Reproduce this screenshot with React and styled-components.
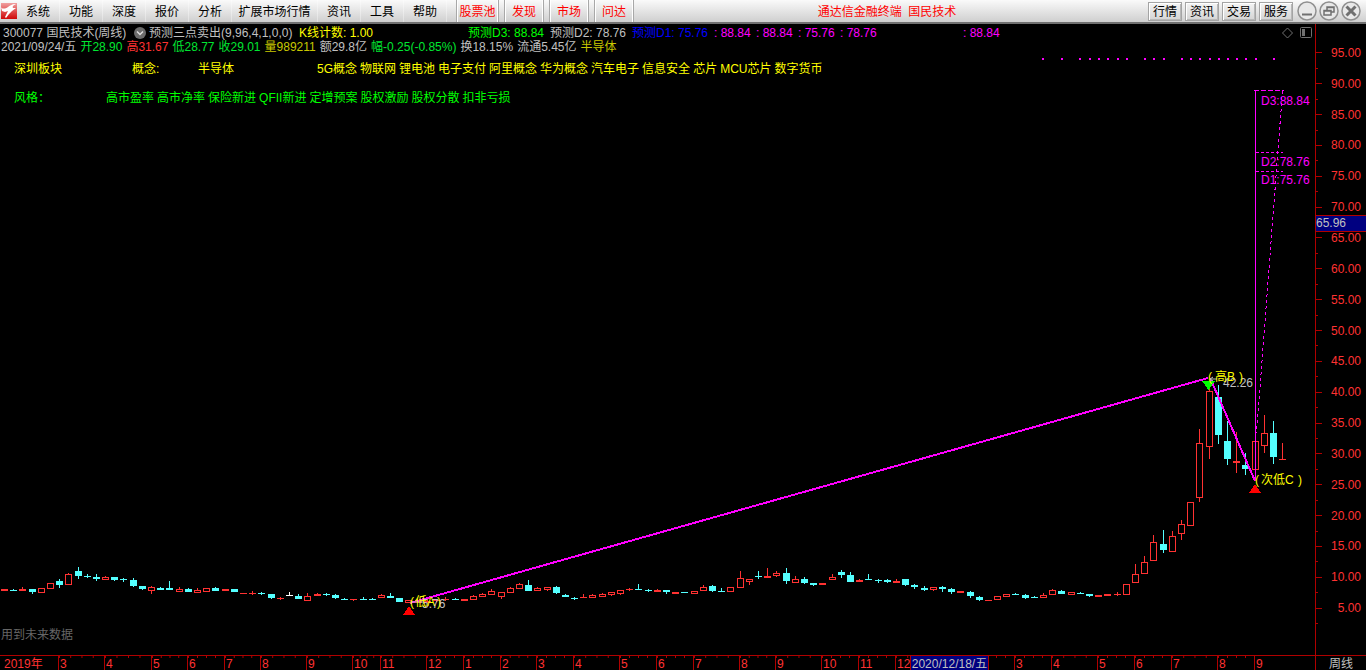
import React from "react";
import styled, { createGlobalStyle } from "styled-components";

const Global = createGlobalStyle`
  * { box-sizing: border-box; }
  body {
    margin: 0;
    background: #000;
    color: #c0c0c0;
    font: 12px/14px "Liberation Sans", "Noto Sans CJK SC", sans-serif;
    overflow: hidden;
  }
  button { font: inherit; padding: 0; }
`;

const RED = "#ff3232";
const AXIS = "#b00000";
const CYAN = "#54ffff";
const MAGENTA = "#ff00ff";
const YELLOW = "#ffff00";
const GREEN = "#00ff00";
const OLIVE = "#c8c800";

const Page = styled.div`
  display: flex;
  flex-direction: column;
  height: 100vh;
`;

/* ---------- Title bar ---------- */

const TitleBar = styled.header`
  display: flex;
  align-items: center;
  flex: none;
  height: 24px;
  padding-left: 1px;
  color: #000;
  background: linear-gradient(#fafafa, #cfcfcf);
  border-bottom: 2px solid #707070;
  white-space: nowrap;
`;

const Logo = styled.svg`
  flex: none;
  width: 16px;
  height: 16px;
`;

const Menu = styled.nav`
  display: flex;
  height: 22px;
`;

const MenuButton = styled.button`
  width: ${(p) => (p.$wide ? 86 : 43)}px;
  padding-top: 2px;
  border: 0;
  border-right: 1px solid rgba(255, 255, 255, 0.35);
  background: none;
  color: #000;
`;

const Shortcuts = styled.div`
  display: flex;
  gap: 5px;
  height: 22px;
  margin-left: 9px;
`;

const ShortcutButton = styled.button`
  width: ${(p) => (p.$wide ? 43 : 40)}px;
  padding-top: 2px;
  border: solid #a8a8a8;
  border-width: 0 1px;
  box-shadow: inset 1px 0 #fff, inset -1px 0 #fff;
  background: none;
  color: #f00;
`;

const Title = styled.h1`
  flex: 1;
  margin: 0;
  padding: 2px 8px 0 0;
  font: inherit;
  text-align: center;
  color: #f00;
`;

const Actions = styled.div`
  display: flex;
  gap: 3px;
`;

const ActionButton = styled.button`
  width: 34px;
  height: 19px;
  padding-top: 1px;
  border: 1px solid #a4a4a4;
  box-shadow: inset 1px 1px #fff, inset -1px -1px #b8b8b8;
  background: linear-gradient(#f4f4f4, #d4d4d4);
  color: #000;
`;

const WindowControls = styled.div`
  display: flex;
  gap: 2px;
  padding: 0 5px 0 4px;
`;

const WindowButton = styled.button`
  display: block;
  width: 20px;
  height: 20px;
  border: 0;
  background: none;
  svg { display: block; }
`;

/* ---------- Chart area ---------- */

const Body = styled.main`
  display: grid;
  flex: 1;
  min-height: 0;
  grid-template-columns: minmax(0, 1fr) 51px;
  grid-template-rows: minmax(0, 1fr) 15px;
`;

const Pane = styled.section`
  display: grid;
  min-height: 0;
  grid-template: minmax(0, 1fr) / minmax(0, 1fr);
  > * { grid-area: 1 / 1; }
`;

const Plot = styled.svg`
  width: 100%;
  height: 100%;
`;

const Legend = styled.div`
  display: flex;
  flex-direction: column;
  z-index: 1;
  padding-top: 2px;
  white-space: nowrap;
`;

const Line = styled.div`
  display: flex;
  align-items: center;
  height: 14px;
  padding-left: ${(p) => p.$indent || 0}px;
  gap: ${(p) => p.$gap || 0}px;
  margin-bottom: ${(p) => p.$after || 0}px;
  color: ${(p) => p.$color || "inherit"};
`;

const Item = styled.span`
  flex: none;
  width: ${(p) => (p.$w ? p.$w + "px" : "auto")};
  color: ${(p) => p.$color || "inherit"};
`;

const Toggle = styled.button`
  width: 16px;
  height: 12px;
  border: 0;
  background: none;
  svg { display: block; }
`;

const PaneTools = styled.div`
  display: flex;
  gap: 7px;
  margin-left: auto;
  padding-right: 3px;
  svg { display: block; }
`;

const Note = styled.p`
  margin: auto 0 13px;
  padding-left: 1px;
  color: #666;
`;

/* ---------- Axes ---------- */

const PriceAxis = styled.aside`
  position: relative;
  display: flex;
  flex-direction: column;
  border-left: 1px solid ${AXIS};
  padding: 13px 0 32px;
`;

const Price = styled.div`
  position: relative;
  display: flex;
  flex: 1;
  align-items: center;
  justify-content: flex-end;
  padding: 1px 5px 0 0;
  color: ${RED};
  &::before, &::after {
    content: "";
    position: absolute;
    left: 0;
    top: 50%;
    width: 6px;
    height: 1px;
    background: ${AXIS};
  }
  &::after { top: 100%; width: 2px; }
`;

const PriceCursor = styled.output`
  position: absolute;
  top: 30.2%;
  left: 0;
  right: 0;
  height: 17px;
  border: solid ${AXIS};
  border-width: 1px 0;
  background: #000080;
  color: #c0c0c0;
`;

const DateAxis = styled.div`
  position: relative;
  display: grid;
  grid-template-columns: ${(p) => p.$columns};
  border-top: 1px solid ${AXIS};
  color: ${RED};
`;

const Month = styled.span`
  min-width: 0;
  padding: 1px 0 0 ${(p) => (p.$first ? 4 : 1)}px;
  border-left: ${(p) => (p.$first ? 0 : 1)}px solid ${AXIS};
  white-space: nowrap;
  background: ${(p) =>
    p.$plain
      ? "none"
      : `linear-gradient(to right, ${AXIS} 1px, transparent 1px) 0 0 / 25% 2px repeat-x`};
`;

const DateCursor = styled.output`
  position: absolute;
  top: 0;
  left: 69.2%;
  width: 79px;
  height: 14px;
  padding-top: 1px;
  border: solid ${AXIS};
  border-width: 0 1px;
  background: #000080;
  color: #c0c0c0;
  text-align: center;
  white-space: nowrap;
`;

const Period = styled.div`
  padding-top: 1px;
  text-align: center;
  border: solid ${AXIS};
  border-width: 1px 0 0 1px;
`;

/* ---------- Data ---------- */

const MENU = ["系统", "功能", "深度", "报价", "分析", "扩展市场行情", "资讯", "工具", "帮助"];
const SHORTCUTS = ["股票池", "发现", "市场", "问达"];
const ACTIONS = ["行情", "资讯", "交易", "服务"];

const QUOTE = [
  ["2021/09/24/五"],
  ["开28.90", "#00e632"],
  ["高31.67", RED],
  ["低28.77", "#00e632"],
  ["收29.01", "#00e632"],
  ["量989211", OLIVE],
  ["额29.8亿"],
  ["幅-0.25(-0.85%)", "#00e632"],
  ["换18.15%"],
  ["流通5.45亿"],
  ["半导体", OLIVE],
];

const CONCEPTS = ["5G概念", "物联网", "锂电池", "电子支付", "阿里概念", "华为概念", "汽车电子", "信息安全", "芯片", "MCU芯片", "数字货币"];
const STYLES = ["高市盈率", "高市净率", "保险新进", "QFII新进", "定增预案", "股权激励", "股权分散", "扣非亏损"];

const PRICES = Array.from({ length: 19 }, (_, i) => 95 - i * 5);

// [label, share of the axis width]
const MONTHS = [
  ["2019年", 58], ["3", 46], ["4", 47], ["5", 36], ["6", 37], ["7", 36], ["8", 46], ["9", 46],
  ["10", 28], ["11", 46], ["12", 37], ["1", 37], ["2", 36], ["3", 37], ["4", 46], ["5", 37],
  ["6", 37], ["7", 46], ["8", 36], ["9", 46], ["10", 37], ["11", 37], ["12", 46], ["", 36],
  ["", 37], ["3", 37], ["4", 46], ["5", 37], ["6", 37], ["7", 46], ["8", 37], ["9", 61],
];

// kind, x, high, body top, body bottom, low
const CANDLES = `
r 4 589 589 591 591|c 13 589 590 591 591|r 22 587 589 591 591|c 32 589 589 592 594|r 41 588 588 593 593
r 50 583 583 589 589|c 59 579 581 585 588|r 68 573 574 585 585|c 78 567 571 576 579|c 87 574 576 577 578
c 96 574 577 579 581|r 105 576 577 580 580|c 114 577 577 580 581|c 123 578 579 580 582|c 133 578 580 586 587
c 142 586 586 589 590|r 151 586 587 591 594|c 160 587 588 590 590|c 169 581 588 590 590|r 179 587 589 592 592
c 188 588 589 592 592|r 197 588 590 593 593|r 206 588 588 592 592|c 215 587 588 591 591|r 225 589 589 591 591
c 234 589 589 592 592|r 243 593 593 594 594|r 252 591 593 594 595|c 261 592 593 594 595|c 271 594 594 598 599
r 280 597 598 599 600|w 289 592 595 596 596|c 298 594 596 599 599|r 307 593 596 601 601|r 317 593 594 596 596
c 326 593 594 595 596|c 335 594 595 598 599|c 344 598 599 600 600|r 353 599 599 600 601|c 363 597 599 600 600
c 372 598 599 600 600|r 381 594 595 598 598|c 390 593 596 598 598|c 399 598 598 602 602|r 408 600 600 603 603
r 418 601 601 603 603|r 427 600 601 603 603|r 436 599 600 601 602|r 445 597 599 600 601|c 455 598 599 600 600
r 464 599 599 601 601|r 473 595 596 600 600|r 482 593 594 597 597|r 491 589 591 595 595|r 501 592 592 597 599
r 510 587 588 593 593|r 519 583 584 589 589|c 528 580 585 591 591|r 537 587 588 591 591|r 547 587 587 590 591
c 556 586 587 593 594|c 565 594 595 597 597|c 574 597 598 599 600|r 583 594 597 598 598|r 592 594 595 598 598
r 602 593 594 597 597|r 611 592 592 595 596|r 620 590 590 594 595|r 629 588 589 590 591|c 638 584 589 590 590
c 648 589 590 591 592|r 657 589 590 592 592|c 666 590 590 592 594|r 675 592 592 594 594|c 684 592 592 593 593
r 694 591 591 594 594|r 703 585 587 591 591|c 712 585 586 591 592|c 721 588 591 592 592|r 730 587 587 592 592
r 740 571 578 588 588|r 749 579 579 582 585|c 758 571 576 577 579|r 767 568 576 578 578|r 776 571 573 576 577
c 786 568 573 581 584|r 795 576 579 583 583|c 804 577 579 583 584|c 813 583 583 585 586|r 822 583 583 585 585
r 832 574 577 580 580|c 841 570 572 575 578|c 850 572 575 582 582|r 859 579 580 582 582|c 868 574 579 580 580
c 878 579 580 581 583|c 887 579 580 582 583|r 896 579 581 583 583|c 905 579 579 585 586|c 914 584 585 587 589
c 924 586 588 590 591|r 933 587 587 590 591|c 942 586 587 589 592|c 951 588 589 592 594|r 960 591 591 593 593
c 970 591 592 596 598|c 979 596 597 600 601|r 988 600 600 601 601|r 997 596 596 600 600|r 1006 594 594 597 597
c 1015 593 594 595 595|c 1025 594 595 598 599|c 1034 596 597 598 598|r 1043 593 595 598 598|r 1052 589 590 595 595
c 1061 590 591 594 594|r 1071 592 592 595 595|c 1080 592 593 594 594|c 1089 594 594 596 597|r 1098 595 595 597 597
r 1107 594 594 596 596|r 1117 592 594 595 596|r 1126 584 584 595 595|r 1135 564 574 583 583|r 1144 556 562 574 574
r 1153 535 542 561 561|c 1163 530 544 550 553|r 1172 531 536 552 552|r 1181 520 524 534 540|r 1190 502 502 526 526
r 1199 429 443 498 502|r 1209 384 391 447 459|c 1218 385 397 435 444|c 1227 421 441 459 465|r 1236 432 461 463 473
c 1245 453 465 469 475|r 1255 441 441 470 470|r 1264 415 433 446 453|c 1273 421 433 457 464|r 1282 443 459 460 460
`
  .trim()
  .split(/[|\n]/)
  .map((s) => {
    const [kind, ...n] = s.split(" ");
    return [kind, ...n.map(Number)];
  });

const DOTS = [1042, 1061, 1079, 1089, 1098, 1107, 1117, 1126, 1144, 1153, 1163, 1181, 1190, 1199, 1209, 1218, 1227, 1236, 1245, 1255, 1273];

const COLORS = { r: RED, c: CYAN, w: "#fff" };

function Candle({ data }) {
  const [kind, x, high, top, bottom, low] = data;
  const color = COLORS[kind];
  const hollow = kind === "r" && bottom - top > 2;
  return (
    <g>
      {top > high && <rect x={x} y={high} width="1" height={top - high} fill={color} />}
      {low > bottom && <rect x={x} y={bottom} width="1" height={low - bottom} fill={color} />}
      {hollow ? (
        <rect x={x - 2.5} y={top + 0.5} width="6" height={bottom - top - 1} fill="none" stroke={color} />
      ) : (
        <rect x={x - 3} y={top} width="7" height={bottom - top} fill={color} />
      )}
    </g>
  );
}

function Chart() {
  return (
    <Plot viewBox="0 24 1315 631" preserveAspectRatio="none" role="img" aria-label="周线 K线图">
      <g shapeRendering="crispEdges">
        {CANDLES.map((c) => <Candle key={c[1]} data={c} />)}
        {DOTS.map((x) => <rect key={x} x={x} y="58" width="2" height="2" fill={MAGENTA} />)}
        <g fill="none" stroke={MAGENTA}>
          <path d="M1255.5 90V481" />
          <path d="M1254 90.5H1284" strokeDasharray="5 2" />
          <path d="M1256 152.5H1283M1256 171.5H1283" strokeDasharray="3 2" />
          <path d="M1282.5 91L1256.5 433" strokeDasharray="3 3" />
          <path d="M410 603L1208 378" strokeWidth="2" />
          <path d="M1211 380L1255 481" strokeWidth="2" />
        </g>
        <path d="M403 615L409 606L415 615Z" fill="#f00" />
        <path d="M1249 493L1255 484L1261 493Z" fill="#f00" />
        <path d="M1202 381H1215L1208.5 390Z" fill={GREEN} />
      </g>
      <g fill="#c0c0c0">
        <path d="M1210 379h7M1213 377l-3 2l3 2M410 602h14" stroke="#c0c0c0" fill="none" />
        <text x="1223" y="387">42.26</text>
        <text x="422" y="608">5.76</text>
      </g>
      <g fill={YELLOW}>
        <text x="1208" y="381">(</text>
        <text x="1215" y="381">高B</text>
        <text x="1239" y="381">)</text>
        <text x="410" y="606">(</text>
        <text x="415" y="606">低A</text>
        <text x="437" y="606">)</text>
        <text x="1255" y="484">(</text>
        <text x="1261" y="484">次低C</text>
        <text x="1298" y="484">)</text>
      </g>
      <g fill={MAGENTA}>
        <text x="1261" y="105">D3:88.84</text>
        <text x="1261" y="166">D2:78.76</text>
        <text x="1261" y="184">D1:75.76</text>
      </g>
    </Plot>
  );
}

function WindowIcon({ children }) {
  return (
    <svg width="20" height="20" viewBox="0 0 20 20" fill="none" stroke="#707070">
      <circle cx="10" cy="10" r="9" fill="#e8e8e8" stroke="#909090" strokeWidth="1.5" />
      {children}
    </svg>
  );
}

export default function App() {
  return (
    <Page>
      <Global />
      <TitleBar>
        <Logo viewBox="0 0 16 16">
          <defs>
            <linearGradient id="logo" x1="0" y1="0" x2="0" y2="1">
              <stop offset="0" stopColor="#f0a0a0" />
              <stop offset="0.5" stopColor="#e05050" />
              <stop offset="1" stopColor="#d00808" />
            </linearGradient>
          </defs>
          <rect width="16" height="16" fill="url(#logo)" />
          <path d="M0 4C1 6 4 6 7 4C9 3 10 1 15 1C12 2 11 4 12 5H15L11 8L8 11L5 15L4 14L7 8L4 9L1 8Z" fill="#fff" />
        </Logo>
        <Menu>
          {MENU.map((m) => <MenuButton key={m} $wide={m.length > 2}>{m}</MenuButton>)}
        </Menu>
        <Shortcuts>
          {SHORTCUTS.map((s) => <ShortcutButton key={s} $wide={s.length > 2}>{s}</ShortcutButton>)}
        </Shortcuts>
        <Title>通达信金融终端&nbsp; 国民技术</Title>
        <Actions>
          {ACTIONS.map((a) => <ActionButton key={a}>{a}</ActionButton>)}
        </Actions>
        <WindowControls>
          <WindowButton aria-label="最小化">
            <WindowIcon><path d="M5 13.5H15" strokeWidth="2" /></WindowIcon>
          </WindowButton>
          <WindowButton aria-label="还原">
            <WindowIcon>
              <path d="M8 9V6H15V11H12M8 6.5H15M5 9.5H12V14H5ZM5 10H12" strokeWidth="1.5" />
            </WindowIcon>
          </WindowButton>
          <WindowButton aria-label="关闭">
            <WindowIcon><path d="M5.5 5.5L14.5 14.5M14.5 5.5L5.5 14.5" strokeWidth="3" /></WindowIcon>
          </WindowButton>
        </WindowControls>
      </TitleBar>

      <Body>
        <Pane>
          <Chart />
          <Legend>
            <Line $indent={3}>
              <Item $w={130}>300077 国民技术(周线)</Item>
              <Toggle aria-label="指标菜单">
                <svg width="13" height="12" viewBox="0 0 13 12">
                  <circle cx="7" cy="6" r="6" fill="#6c6c6c" />
                  <path d="M4 4.5L7 7.5L10 4.5" fill="none" stroke="#ddd" strokeWidth="1.5" />
                </svg>
              </Toggle>
              <Item $w={150}>预测三点卖出(9,96,4,1,0,0)</Item>
              <Item $w={169} $color={YELLOW}>K线计数: 1.00</Item>
              <Item $w={82} $color={GREEN}>预测D3: 88.84</Item>
              <Item $w={82}>预测D2: 78.76</Item>
              <Item $w={82} $color="#0000ff">预测D1: 75.76</Item>
              <Item $w={42} $color={MAGENTA}>: 88.84</Item>
              <Item $w={42} $color={MAGENTA}>: 88.84</Item>
              <Item $w={42} $color={MAGENTA}>: 75.76</Item>
              <Item $w={123} $color={MAGENTA}>: 78.76</Item>
              <Item $color={MAGENTA}>: 88.84</Item>
              <PaneTools>
                <svg width="11" height="12" viewBox="0 0 11 12" fill="none" stroke="#707070">
                  <path d="M5.5 1L10.5 6L5.5 11L0.5 6Z" />
                </svg>
                <svg width="12" height="12" viewBox="0 0 12 12">
                  <rect x="0.5" y="0.5" width="11" height="10" rx="1" fill="none" stroke="#707070" />
                  <rect x="2" y="2" width="3" height="7" fill="#707070" />
                </svg>
              </PaneTools>
            </Line>
            <Line $indent={1} $gap={4} $after={8}>
              {QUOTE.map(([text, color]) => <Item key={text} $color={color}>{text}</Item>)}
            </Line>
            <Line $indent={14} $gap={3} $color={YELLOW} $after={15}>
              <Item $w={115}>深圳板块</Item>
              <Item $w={63}>概念:</Item>
              <Item $w={116}>半导体</Item>
              {CONCEPTS.map((c) => <Item key={c}>{c}</Item>)}
            </Line>
            <Line $indent={14} $gap={3} $color={GREEN}>
              <Item $w={89}>风格：</Item>
              {STYLES.map((s) => <Item key={s}>{s}</Item>)}
            </Line>
            <Note>用到未来数据</Note>
          </Legend>
        </Pane>

        <PriceAxis>
          {PRICES.map((p) => <Price key={p}>{p.toFixed(2)}</Price>)}
          <PriceCursor>65.96</PriceCursor>
        </PriceAxis>

        <DateAxis $columns={MONTHS.map((m) => `minmax(0, ${m[1]}fr)`).join(" ")}>
          {MONTHS.map(([label], i) => (
            <Month key={i} $first={i === 0} $plain={i === 0 || i === MONTHS.length - 1}>{label}</Month>
          ))}
          <DateCursor>2020/12/18/五</DateCursor>
        </DateAxis>
        <Period>周线</Period>
      </Body>
    </Page>
  );
}
